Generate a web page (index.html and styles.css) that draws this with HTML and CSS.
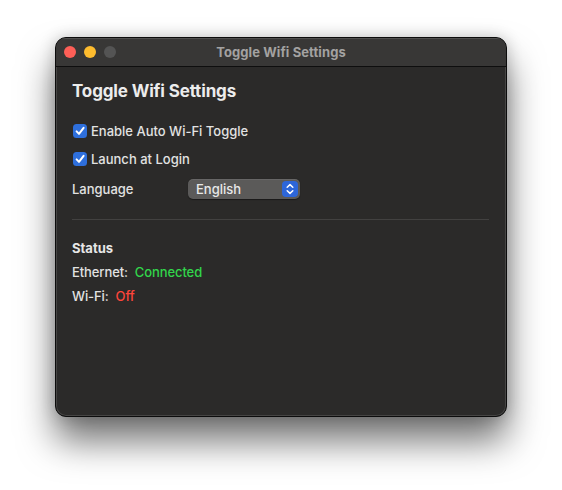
FILE: index.html
```html
<!DOCTYPE html>
<html>
<head>
<meta charset="utf-8">
<link rel="stylesheet" href="styles.css">
</head>
<body>
<div class="window">
  <div class="titlebar">
    <div class="lights">
      <span class="light red"></span>
      <span class="light yellow"></span>
      <span class="light gray"></span>
    </div>
    <div class="title">Toggle Wifi Settings</div>
  </div>
  <div class="content">
    <h1 class="heading">Toggle Wifi Settings</h1>
    <label class="check-row first">
      <span class="checkbox"><svg width="14" height="14" viewBox="0 0 14 14"><path d="M3.6 7.4 L6 9.9 L10.6 3.9" fill="none" stroke="#fff" stroke-width="2" stroke-linecap="round" stroke-linejoin="round"/></svg></span>
      <span class="check-label">Enable Auto Wi-Fi Toggle</span>
    </label>
    <label class="check-row">
      <span class="checkbox"><svg width="14" height="14" viewBox="0 0 14 14"><path d="M3.6 7.4 L6 9.9 L10.6 3.9" fill="none" stroke="#fff" stroke-width="2" stroke-linecap="round" stroke-linejoin="round"/></svg></span>
      <span class="check-label">Launch at Login</span>
    </label>
    <div class="lang-row">
      <span class="lang-label">Language</span>
      <div class="popup">
        <span class="popup-text">English</span>
        <span class="popup-arrows"><svg width="16" height="16" viewBox="0 0 16 16"><path d="M5.2 6.2 L8 3.6 L10.8 6.2 M5.2 9.8 L8 12.4 L10.8 9.8" fill="none" stroke="#fff" stroke-width="1.5" stroke-linecap="round" stroke-linejoin="round"/></svg></span>
      </div>
    </div>
    <div class="separator"></div>
    <div class="status-title">Status</div>
    <div class="status-row"><span class="status-key">Ethernet:</span><span class="ok">Connected</span></div>
    <div class="status-row"><span class="status-key">Wi-Fi:</span><span class="bad">Off</span></div>
  </div>
</div>
</body>
</html>
```
FILE: styles.css
```css
html, body {
  margin: 0;
  padding: 0;
  background: #ffffff;
}
body {
  box-sizing: border-box;
  min-height: 490px;
  padding: 37px 0 0 55px;
  font-family: Inter, "Noto Sans", "Liberation Sans", sans-serif;
  -webkit-font-smoothing: antialiased;
}
.window {
  box-sizing: border-box;
  width: 452px;
  height: 380px;
  border: 1px solid #0c0c0c;
  border-radius: 11px;
  background: #2b2a29;
  box-shadow: inset 0 0 0 1px rgba(255,255,255,0.13), 0 24px 36px rgba(0,0,0,0.55), 0 0 16px rgba(0,0,0,0.2);
  overflow: hidden;
  display: flex;
  flex-direction: column;
}
.titlebar {
  height: 28px;
  flex: 0 0 28px;
  background: #383736;
  border-bottom: 1px solid #0e0e0e;
  display: flex;
  align-items: center;
  position: relative;
  box-shadow: inset 0 1px 0 rgba(255,255,255,0.12);
}
.lights {
  display: flex;
  gap: 8px;
  padding-left: 8px;
  position: relative;
  z-index: 1;
}
.light {
  width: 12px;
  height: 12px;
  border-radius: 50%;
  display: block;
}
.red { background: #fe5f57; }
.yellow { background: #febc2e; }
.gray { background: #545454; }
.title {
  position: absolute;
  left: 0;
  right: 0;
  top: 0;
  bottom: 0;
  display: flex;
  align-items: center;
  justify-content: center;
  font-size: 13px;
  font-weight: 700;
  color: #a3a2a1;
  letter-spacing: 0.1px;
}
.content {
  padding: 13px 16px 0 16px;
  display: flex;
  flex-direction: column;
  color: #e2e2e2;
  font-size: 13px;
  font-weight: 500;
}
.heading {
  margin: 0;
  font-size: 17px;
  font-weight: 700;
  line-height: 22px;
  color: #ececec;
  letter-spacing: -0.15px;
}
.check-row {
  display: flex;
  align-items: center;
  height: 20px;
  margin-top: 8px;
}
.check-row.first {
  margin-top: 19px;
}
.checkbox {
  width: 14px;
  height: 14px;
  border-radius: 3.5px;
  background: #2e6fdc;
  display: flex;
  margin-left: 1px;
  margin-right: 4px;
}
.check-label {
  line-height: 20px;
}
.lang-row {
  display: flex;
  align-items: center;
  height: 20px;
  margin-top: 10px;
}
.lang-label {
  width: 116px;
  line-height: 20px;
}
.popup {
  box-sizing: border-box;
  width: 112px;
  height: 20px;
  border-radius: 5px;
  background: #5b5a59;
  box-shadow: inset 0 1px 0 rgba(255,255,255,0.08), 0 0.5px 1px rgba(0,0,0,0.4);
  display: flex;
  align-items: center;
  justify-content: space-between;
  padding: 0 2px 0 8px;
}
.popup-text {
  color: #e8e8e8;
  line-height: 20px;
}
.popup-arrows {
  width: 16px;
  height: 16px;
  border-radius: 4px;
  background: #2d66d9;
  display: flex;
}
.separator {
  height: 1px;
  background: #424140;
  margin-top: 20px;
  margin-right: 1px;
}
.status-title {
  margin-top: 19px;
  font-weight: 700;
  line-height: 18px;
  color: #e6e6e6;
}
.status-row {
  line-height: 18px;
  margin-top: 6px;
  display: flex;
  gap: 7px;
  letter-spacing: -0.1px;
}
.ok { color: #32d64b; }
.bad { color: #fe453a; }
```
